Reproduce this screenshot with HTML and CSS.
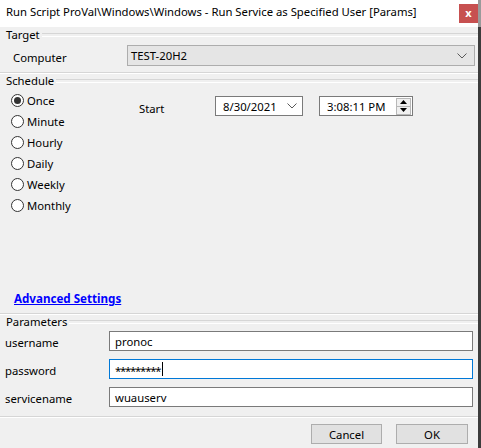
FILE: index.html
```html
<!DOCTYPE html>
<html>
<head>
<meta charset="utf-8">
<link rel="stylesheet" href="styles.css">
</head>
<body>
<div class="window">
  <div class="titlebar">
    <span class="title">Run Script ProVal\Windows\Windows - Run Service as Specified User [Params]</span>
    <div class="close">x</div>
  </div>
  <div class="client">
    <div class="group-head head-target"><span>Target</span></div>
    <div class="computer-row">
      <span class="lbl">Computer</span>
      <div class="combo">
        <span>TEST-20H2</span>
        <svg class="chev" width="10" height="6" viewBox="0 0 10 6"><path d="M0.5 0.5 L5 5 L9.5 0.5" fill="none" stroke="#5a5a5a" stroke-width="1"/></svg>
      </div>
    </div>
    <div class="sep sep-target"></div>
    <div class="group-head"><span>Schedule</span></div>
    <div class="schedule">
      <div class="radios">
        <div class="radio checked"><span class="dot"></span><span>Once</span></div>
        <div class="radio"><span class="dot"></span><span>Minute</span></div>
        <div class="radio"><span class="dot"></span><span>Hourly</span></div>
        <div class="radio"><span class="dot"></span><span>Daily</span></div>
        <div class="radio"><span class="dot"></span><span>Weekly</span></div>
        <div class="radio"><span class="dot"></span><span>Monthly</span></div>
      </div>
      <div class="start">
        <span class="start-lbl">Start</span>
        <div class="datebox">
          <span>8/30/2021</span>
          <svg class="chev" width="10" height="6" viewBox="0 0 10 6"><path d="M0.5 0.5 L5 5 L9.5 0.5" fill="none" stroke="#5a5a5a" stroke-width="1"/></svg>
        </div>
        <div class="timebox">
          <span>3:08:11 PM</span>
          <div class="spinner">
            <div class="spin"><svg width="7" height="4" viewBox="0 0 7 4"><path d="M0 4 L3.5 0 L7 4 Z" fill="#000"/></svg></div>
            <div class="spin"><svg width="7" height="4" viewBox="0 0 7 4"><path d="M0 0 L3.5 4 L7 0 Z" fill="#000"/></svg></div>
          </div>
        </div>
      </div>
    </div>
    <a class="advanced" href="#">Advanced Settings</a>
    <div class="sep sep-adv"></div>
    <div class="group-head"><span>Parameters</span></div>
    <div class="params">
      <span class="plbl">username</span>
      <div class="field">pronoc</div>
      <span class="plbl">password</span>
      <div class="field focused"><span class="stars">*********</span><span class="caret"></span></div>
      <span class="plbl">servicename</span>
      <div class="field">wuauserv</div>
    </div>
    <div class="sep sep-params"></div>
    <div class="buttons">
      <div class="btn btn-cancel">Cancel</div>
      <div class="btn btn-ok">OK</div>
    </div>
  </div>
</div>
</body>
</html>
```

FILE: styles.css
```css
* { box-sizing: border-box; }
html, body { margin: 0; padding: 0; }
body {
  width: 481px;
  height: 448px;
  overflow: hidden;
  background: #f0f0f0;
  font-family: "Noto Sans", "Liberation Sans", sans-serif;
  font-size: 11.3px;
  color: #000;
}
.window {
  width: 481px;
  height: 448px;
  display: flex;
  flex-direction: column;
}
.titlebar {
  height: 27px;
  background: #fff;
  display: flex;
  align-items: flex-start;
  justify-content: space-between;
  border-right: 3px solid #9a9a9a;
}
.title {
  padding: 4px 0 0 6px;
  line-height: 16px;
  font-size: 11.3px;
}
.close {
  width: 19px;
  height: 19px;
  margin-top: 4px;
  background: #c75050;
  color: #fff;
  font-weight: bold;
  font-size: 11px;
  line-height: 18px;
  text-align: center;
}
.client {
  flex: 1;
  display: flex;
  flex-direction: column;
  border-right: 3px solid #3c3c3c;
}
.group-head {
  height: 13px;
  display: flex;
  align-items: center;
  padding-left: 6px;
  line-height: 13px;
}
.group-head::after {
  content: "";
  flex: 1;
  margin-left: 2px;
  height: 2px;
  border-top: 1px solid #d6d6d6;
  border-bottom: 1px solid #fff;
  margin-top: 1px;
}
.head-target { margin-top: 1px; }
.computer-row {
  display: grid;
  grid-template-columns: 114px 1fr;
  align-items: center;
  padding: 0 3px 0 13px;
  margin-top: 4px;
}
.lbl { padding-top: 3px; }
.combo {
  height: 21px;
  background: #e5e5e5;
  border: 1px solid #adadad;
  display: flex;
  align-items: center;
  justify-content: space-between;
  padding: 0 7px 0 3px;
}
.sep {
  height: 2px;
  border-top: 1px solid #d6d6d6;
  border-bottom: 1px solid #fff;
}
.sep-target { margin-top: 6px; }
.schedule {
  display: grid;
  grid-template-columns: 128px 1fr;
  padding-left: 11px;
  margin-top: 3px;
}
.radio {
  height: 21px;
  display: flex;
  align-items: center;
  gap: 3px;
}
.dot {
  width: 13px;
  height: 13px;
  border: 1px solid #333;
  border-radius: 50%;
  background: #fff;
  display: flex;
  align-items: center;
  justify-content: center;
}
.checked .dot::after {
  content: "";
  width: 7px;
  height: 7px;
  border-radius: 50%;
  background: #333;
}
.start {
  display: flex;
  align-items: center;
  margin-top: 6px;
  height: 20px;
  align-self: start;
}
.start-lbl { width: 76px; padding-top: 4px; }
.datebox, .timebox {
  height: 20px;
  background: #fff;
  border: 1px solid #7a7a7a;
  display: flex;
  align-items: center;
  justify-content: space-between;
  padding-left: 7px;
}
.datebox { width: 88px; padding-right: 5px; }
.timebox { width: 94px; margin-left: 16px; padding-right: 1px; }
.spinner {
  width: 15px;
  height: 17px;
  display: flex;
  flex-direction: column;
  border: 1px solid #b8b8b8;
}
.spin {
  flex: 1;
  display: flex;
  align-items: center;
  justify-content: center;
  background: #f0f0f0;
}
.spin + .spin { border-top: 1px solid #b8b8b8; }
.advanced {
  display: block;
  margin-top: 75px;
  padding-left: 14px;
  height: 15px;
  line-height: 15px;
  color: #0000ff;
  font-weight: bold;
  font-size: 11.6px;
  text-decoration: underline;
}
.sep-adv { margin-top: 7px; }
.params {
  display: grid;
  grid-template-columns: 104px 1fr;
  row-gap: 8px;
  align-items: center;
  padding: 0 5px;
  margin-top: 3px;
}
.plbl { padding-top: 2px; }
.field {
  height: 20px;
  background: #fff;
  border: 1px solid #7a7a7a;
  padding-left: 5px;
  display: flex;
  align-items: center;
}
.field.focused { border-color: #0078d7; }
.stars { letter-spacing: -1.2px; padding-top: 2px; }
.caret {
  width: 1px;
  height: 14px;
  background: #000;
  margin-left: 2px;
}
.sep-params { margin-top: 9px; }
.buttons {
  display: flex;
  justify-content: flex-end;
  gap: 14px;
  padding-right: 10px;
  margin-top: 6px;
}
.btn {
  height: 20px;
  background: #e1e1e1;
  border: 1px solid #adadad;
  display: flex;
  align-items: center;
  justify-content: center;
}
.btn-cancel { width: 71px; }
.btn-ok { width: 72px; }
```
